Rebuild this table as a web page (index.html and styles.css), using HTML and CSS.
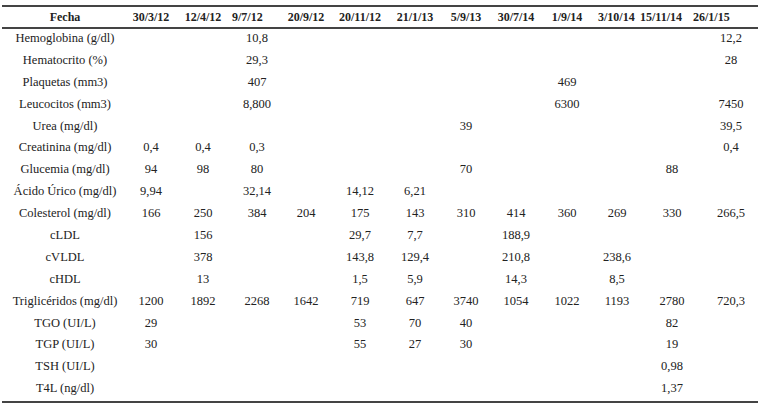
FILE: index.html
```html
<!DOCTYPE html>
<html lang="es">
<head>
<meta charset="utf-8">
<title>Tabla de laboratorio</title>
<link rel="stylesheet" href="styles.css">
</head>
<body>
<table class="lab">
  <colgroup>
    <col class="c-label">
    <col class="c1"><col class="c2"><col class="c3"><col class="c4"><col class="c5"><col class="c6">
    <col class="c7"><col class="c8"><col class="c9"><col class="c10"><col class="c11"><col class="c12">
  </colgroup>
  <thead>
    <tr>
      <th class="label">Fecha</th>
      <th>30/3/12</th>
      <th>12/4/12</th>
      <th class="h-c3">9/7/12</th>
      <th>20/9/12</th>
      <th>20/11/12</th>
      <th>21/1/13</th>
      <th>5/9/13</th>
      <th>30/7/14</th>
      <th>1/9/14</th>
      <th class="h-c10">3/10/14</th>
      <th class="h-c11">15/11/14</th>
      <th class="h-c12">26/1/15</th>
    </tr>
  </thead>
  <tbody>
    <tr><td class="label">Hemoglobina (g/dl)</td><td></td><td></td><td>10,8</td><td></td><td></td><td></td><td></td><td></td><td></td><td></td><td></td><td>12,2</td></tr>
    <tr><td class="label">Hematocrito (%)</td><td></td><td></td><td>29,3</td><td></td><td></td><td></td><td></td><td></td><td></td><td></td><td></td><td>28</td></tr>
    <tr><td class="label">Plaquetas (mm3)</td><td></td><td></td><td>407</td><td></td><td></td><td></td><td></td><td></td><td>469</td><td></td><td></td><td></td></tr>
    <tr><td class="label">Leucocitos (mm3)</td><td></td><td></td><td>8,800</td><td></td><td></td><td></td><td></td><td></td><td>6300</td><td></td><td></td><td>7450</td></tr>
    <tr><td class="label">Urea (mg/dl)</td><td></td><td></td><td></td><td></td><td></td><td></td><td>39</td><td></td><td></td><td></td><td></td><td>39,5</td></tr>
    <tr><td class="label">Creatinina (mg/dl)</td><td>0,4</td><td>0,4</td><td>0,3</td><td></td><td></td><td></td><td></td><td></td><td></td><td></td><td></td><td>0,4</td></tr>
    <tr><td class="label">Glucemia (mg/dl)</td><td>94</td><td>98</td><td>80</td><td></td><td></td><td></td><td>70</td><td></td><td></td><td></td><td>88</td><td></td></tr>
    <tr><td class="label">Ácido Úrico (mg/dl)</td><td>9,94</td><td></td><td>32,14</td><td></td><td>14,12</td><td>6,21</td><td></td><td></td><td></td><td></td><td></td><td></td></tr>
    <tr><td class="label">Colesterol (mg/dl)</td><td>166</td><td>250</td><td>384</td><td>204</td><td>175</td><td>143</td><td>310</td><td>414</td><td>360</td><td>269</td><td>330</td><td>266,5</td></tr>
    <tr><td class="label">cLDL</td><td></td><td>156</td><td></td><td></td><td>29,7</td><td>7,7</td><td></td><td>188,9</td><td></td><td></td><td></td><td></td></tr>
    <tr><td class="label">cVLDL</td><td></td><td>378</td><td></td><td></td><td>143,8</td><td>129,4</td><td></td><td>210,8</td><td></td><td>238,6</td><td></td><td></td></tr>
    <tr><td class="label">cHDL</td><td></td><td>13</td><td></td><td></td><td>1,5</td><td>5,9</td><td></td><td>14,3</td><td></td><td>8,5</td><td></td><td></td></tr>
    <tr><td class="label">Triglicéridos (mg/dl)</td><td>1200</td><td>1892</td><td>2268</td><td>1642</td><td>719</td><td>647</td><td>3740</td><td>1054</td><td>1022</td><td>1193</td><td>2780</td><td>720,3</td></tr>
    <tr><td class="label">TGO (UI/L)</td><td>29</td><td></td><td></td><td></td><td>53</td><td>70</td><td>40</td><td></td><td></td><td></td><td>82</td><td></td></tr>
    <tr><td class="label">TGP (UI/L)</td><td>30</td><td></td><td></td><td></td><td>55</td><td>27</td><td>30</td><td></td><td></td><td></td><td>19</td><td></td></tr>
    <tr><td class="label">TSH (UI/L)</td><td></td><td></td><td></td><td></td><td></td><td></td><td></td><td></td><td></td><td></td><td>0,98</td><td></td></tr>
    <tr><td class="label">T4L (ng/dl)</td><td></td><td></td><td></td><td></td><td></td><td></td><td></td><td></td><td></td><td></td><td>1,37</td><td></td></tr>
  </tbody>
</table>
</body>
</html>
```
FILE: styles.css
```css
html, body {
  margin: 0;
  padding: 0;
  background: #ffffff;
}

.lab {
  margin: 5px 0 0 2px;
  width: 756px;
  table-layout: fixed;
  border-collapse: separate;
  border-spacing: 0;
  border-top: 2px solid #444444;
  border-bottom: 2px solid #444444;
  font-family: "Liberation Serif", "Times New Roman", serif;
  font-size: 12.5px;
  color: #222222;
}

.c-label { width: 126px; }
.c1 { width: 46px; }
.c2 { width: 58px; }
.c3 { width: 50px; }
.c4 { width: 48px; }
.c5 { width: 60px; }
.c6 { width: 50px; }
.c7 { width: 52px; }
.c8 { width: 48px; }
.c9 { width: 54px; }
.c10 { width: 46px; }
.c11 { width: 64px; }
.c12 { width: 54px; }

.lab th {
  height: 20px;
  padding: 0;
  font-size: 12px;
  font-weight: bold;
  text-align: center;
  white-space: nowrap;
  line-height: 20px;
  border-bottom: 2px solid #444444;
}

.lab td {
  height: 21.9px;
  padding: 0 0 3.9px 0;
  line-height: 18px;
  text-align: center;
  white-space: nowrap;
  box-sizing: border-box;
}

.lab .h-c3 {
  text-align: left;
}

.lab .h-c10 {
  text-align: left;
  padding-left: 4px;
}

.lab .h-c11 {
  text-align: left;
}

.lab .h-c12 {
  text-align: left;
  text-indent: -11px;
}
```
